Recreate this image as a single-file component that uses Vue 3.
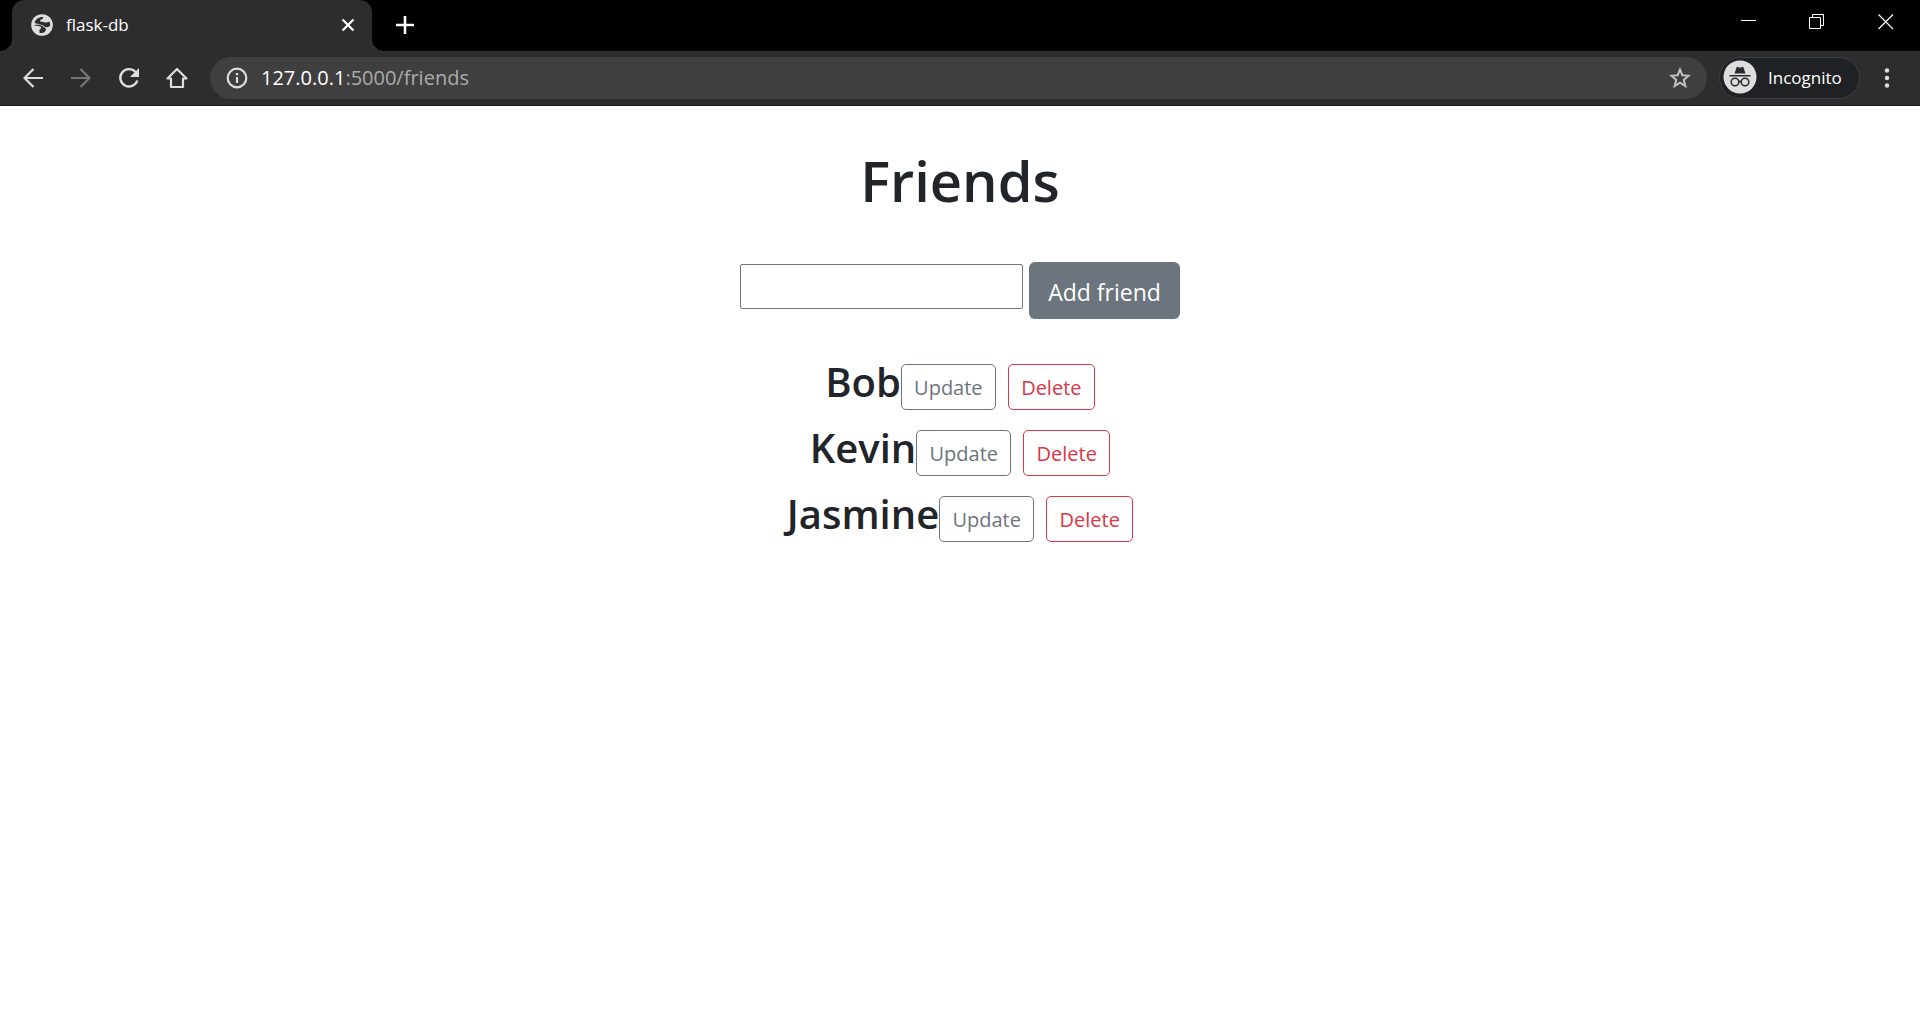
<script setup>
import { ref } from 'vue'

const newFriend = ref('')
const friends = ref(['Bob', 'Kevin', 'Jasmine'])
</script>

<template>
  <div class="browser">
    <header class="titlebar">
      <div class="tab">
        <svg class="favicon" width="22" height="22" viewBox="0 0 22 22" aria-hidden="true">
          <circle cx="11" cy="11" r="10.800" fill="#dedede" />
          <path d="M12.500 3 C8 2.500 4.500 5.500 3.500 8.500 C5.500 10.500 8 9.500 9.500 10.500 C11 11.500 12 11 13.500 12.500 C15 14 17.500 13 19 12 C19.300 10 19 8.500 18.300 7.500 C16.500 8.500 14.500 9 12.500 8 C11 7.500 9.500 8 9 7 C9 5.500 12 5.500 12.500 3Z" fill="#2d2d2d" />
          <path d="M2.800 11 C5 12.500 7 11.500 9 12.500 C11 13.500 10 15 8.500 15.500 L8.500 18.700 C12 19.700 14.500 18 15 15.500 C15 13.500 12 13 11 12 L8 10.500Z" fill="#2d2d2d" />
        </svg>
        <span class="tab-title">flask-db</span>
        <button class="icon-btn tab-close" aria-label="Close tab">
          <svg width="14" height="14" viewBox="0 0 14 14"><path d="M1.500 1.500 L12.500 12.500 M12.500 1.500 L1.500 12.500" stroke="#fff" stroke-width="2.200" /></svg>
        </button>
      </div>
      <button class="icon-btn new-tab" aria-label="New tab">
        <svg width="18" height="18" viewBox="0 0 18 18"><path d="M9 0 V18 M0 9 H18" stroke="#fff" stroke-width="2.600" /></svg>
      </button>
      <div class="window-controls">
        <button class="icon-btn" aria-label="Minimize">
          <svg width="16" height="16" viewBox="0 0 16 16"><path d="M1 6.500 H16" stroke="#fff" /></svg>
        </button>
        <button class="icon-btn" aria-label="Restore">
          <svg width="16" height="16" viewBox="0 0 16 16" fill="none" stroke="#fff"><path d="M.5 3.500 H11.500 V14.500 H.5Z M3.500 3.500 V.5 H14.500 V11.500 H11.500" /></svg>
        </button>
        <button class="icon-btn" aria-label="Close">
          <svg width="16" height="16" viewBox="0 0 16 16"><path d="M.5 .5 L15 15 M15 .5 L.5 15" stroke="#fff" stroke-width="1.200" /></svg>
        </button>
      </div>
    </header>

    <nav class="toolbar">
      <button class="icon-btn nav-btn" aria-label="Back">
        <svg width="20" height="20" viewBox="0 0 20 20" fill="none" stroke="#dedede" stroke-width="2.200"><path d="M20 10 H2 M10.500 1 L1.500 10 L10.500 19" /></svg>
      </button>
      <button class="icon-btn nav-btn" aria-label="Forward">
        <svg width="20" height="20" viewBox="0 0 20 20" fill="none" stroke="#757575" stroke-width="2.200"><path d="M0 10 H18 M9.500 1 L18.500 10 L9.500 19" /></svg>
      </button>
      <button class="icon-btn nav-btn" aria-label="Reload">
        <svg width="22" height="22" viewBox="0 0 22 22"><path d="M17.500 5 A8.700 8.700 0 1 0 19.300 13.500" fill="none" stroke="#dedede" stroke-width="2.400" /><path d="M21 1 V10 H12Z" fill="#dedede" /></svg>
      </button>
      <button class="icon-btn nav-btn" aria-label="Home">
        <svg width="22" height="22" viewBox="0 0 22 22"><path d="M1.500 11.500 L11 2 L20.500 11.500 H17 V20 H5 V11.500Z" fill="none" stroke="#dedede" stroke-width="2.200" stroke-linejoin="round" /></svg>
      </button>
      <div class="address">
        <svg class="info" width="22" height="22" viewBox="0 0 22 22"><circle cx="11" cy="11" r="9.300" fill="none" stroke="#dedede" stroke-width="2.200" /><path d="M11 10 V16 M11 6 V8.200" stroke="#dedede" stroke-width="2.200" /></svg>
        <a class="url" href="#"><span class="host">127.0.0.1</span>:5000/friends</a>
        <button class="icon-btn star" aria-label="Bookmark this page">
          <svg width="22" height="22" viewBox="0 0 22 22"><path d="M11 2.500 L13.300 8.200 L19.500 8.800 L14.800 12.800 L16.300 19 L11 15.600 L5.700 19 L7.200 12.800 L2.500 8.800 L8.700 8.200Z" fill="none" stroke="#c2c2c2" stroke-width="2" /></svg>
        </button>
      </div>
      <button class="incognito">
        <svg width="34" height="34" viewBox="0 0 34 34" aria-hidden="true">
          <circle cx="17" cy="17" r="16.500" fill="#dedede" />
          <path d="M11.500 13.500 L13.500 7.500 Q14 6.500 15 7 Q17 8 19 7 Q20 6.500 20.500 7.500 L22.500 13.500Z M6.500 15 H27.500 V16.500 H6.500Z" fill="#292b2e" />
          <g fill="none" stroke="#292b2e" stroke-width="1.500"><circle cx="12" cy="22" r="3.800" /><circle cx="22" cy="22" r="3.800" /><path d="M15.800 22 Q17 20.500 18.200 22" /></g>
        </svg>
        <span>Incognito</span>
      </button>
      <button class="icon-btn menu" aria-label="Menu">
        <svg width="6" height="20" viewBox="0 0 6 20" fill="#dedede"><circle cx="3" cy="2.500" r="2.200" /><circle cx="3" cy="10" r="2.200" /><circle cx="3" cy="17.500" r="2.200" /></svg>
      </button>
    </nav>

    <main class="page">
      <h1>Friends</h1>
      <form class="add-form" @submit.prevent>
        <input v-model="newFriend" type="text" aria-label="Friend name" />
        <button class="add-btn" type="submit">Add friend</button>
      </form>
      <ul class="friends">
        <li v-for="friend in friends" :key="friend">
          <h2>{{ friend }}</h2>
          <a class="action update" href="#">Update</a>
          <a class="action delete" href="#">Delete</a>
        </li>
      </ul>
    </main>
  </div>
</template>

<style>
body {
  margin: 0;
  background: #fff;
}
</style>

<style scoped>
* {
  box-sizing: border-box;
}

.browser {
  font-family: "Open Sans", "Noto Sans", sans-serif;
  color: #212529;
}

svg {
  display: block;
  flex: none;
}

button {
  font-family: inherit;
  cursor: pointer;
}

a {
  text-decoration: none;
}

.icon-btn {
  display: flex;
  align-items: center;
  justify-content: center;
  padding: 0;
  border: 0;
  background: none;
}

.titlebar {
  display: flex;
  height: 51px;
  padding-left: 12px;
  background: #000;
}

.tab {
  position: relative;
  display: flex;
  align-items: center;
  width: 360px;
  padding: 0 17px 2px 19px;
  border-radius: 12px 12px 0 0;
  background: #2d2d2d;
}

.tab::before,
.tab::after {
  content: "";
  position: absolute;
  bottom: 0;
  width: 12px;
  height: 12px;
}

.tab::before {
  right: 100%;
  background: radial-gradient(circle at 0 0, #000 12px, #2d2d2d 12px);
}

.tab::after {
  left: 100%;
  background: radial-gradient(circle at 100% 0, #000 12px, #2d2d2d 12px);
}

.tab-title {
  flex: 1;
  margin-left: 13px;
  color: #fff;
  font-size: 17px;
  line-height: 24px;
}

.new-tab {
  width: 66px;
  padding-bottom: 2px;
}

.window-controls {
  display: flex;
  height: 43px;
  margin-left: auto;
}

.window-controls .icon-btn {
  width: 69px;
}

.toolbar {
  display: flex;
  align-items: center;
  height: 55px;
  padding: 0 26px 0 9px;
  border-bottom: 1px solid #1d1d1d;
  background: #2d2d2d;
}

.nav-btn {
  width: 48px;
  height: 40px;
}

.address {
  display: flex;
  flex: 1;
  align-items: center;
  height: 42px;
  margin-left: 9px;
  padding: 0 16px;
  border-radius: 21px;
  background: #3f3f3f;
}

.url {
  flex: 1;
  margin-left: 13px;
  color: #ababab;
  font-size: 20px;
  line-height: 28px;
}

.host {
  color: #fff;
}

.incognito {
  display: flex;
  align-items: center;
  gap: 11px;
  width: 141px;
  height: 42px;
  margin-left: 12px;
  padding: 0 3px 2px;
  border: 1px solid #3c4043;
  border-radius: 21px;
  background: #202124;
  color: #fff;
  font-size: 17px;
}

.menu {
  width: 14px;
  height: 40px;
  margin-left: 20px;
}

.page {
  display: flex;
  flex-direction: column;
  align-items: center;
  padding-top: 38px;
}

h1 {
  margin: 0;
  font-size: 56px;
  font-weight: 600;
  line-height: 72px;
}

.add-form {
  display: flex;
  align-items: flex-start;
  gap: 6px;
  margin-top: 46px;
}

.add-form input {
  width: 283px;
  height: 45px;
  margin-top: 2px;
  padding: 2px 4px;
  border: 1px solid #767676;
  border-radius: 2px;
  outline: 0;
  font: inherit;
  font-size: 23px;
}

.add-btn {
  width: 151px;
  height: 57px;
  padding: 3px 0 0;
  border: 0;
  border-radius: 6px;
  background: #6c757d;
  color: #fff;
  font-size: 23px;
  line-height: 36px;
}

.friends {
  display: flex;
  flex-direction: column;
  gap: 20px;
  margin: 45px 0 0;
  padding: 0;
  list-style: none;
}

.friends li {
  display: flex;
  justify-content: center;
  height: 46px;
}

h2 {
  margin: 0;
  font-size: 40px;
  font-weight: 600;
  line-height: 36px;
}

.action {
  width: 87px;
  padding: 7px 0 0;
  border: 1px solid #dc3545;
  border-radius: 5px;
  color: #dc3545;
  font-size: 20px;
  line-height: 32px;
  text-align: center;
}

.update {
  width: 95px;
  margin-right: 12px;
  border-color: #6c757d;
  color: #6c757d;
}
</style>
